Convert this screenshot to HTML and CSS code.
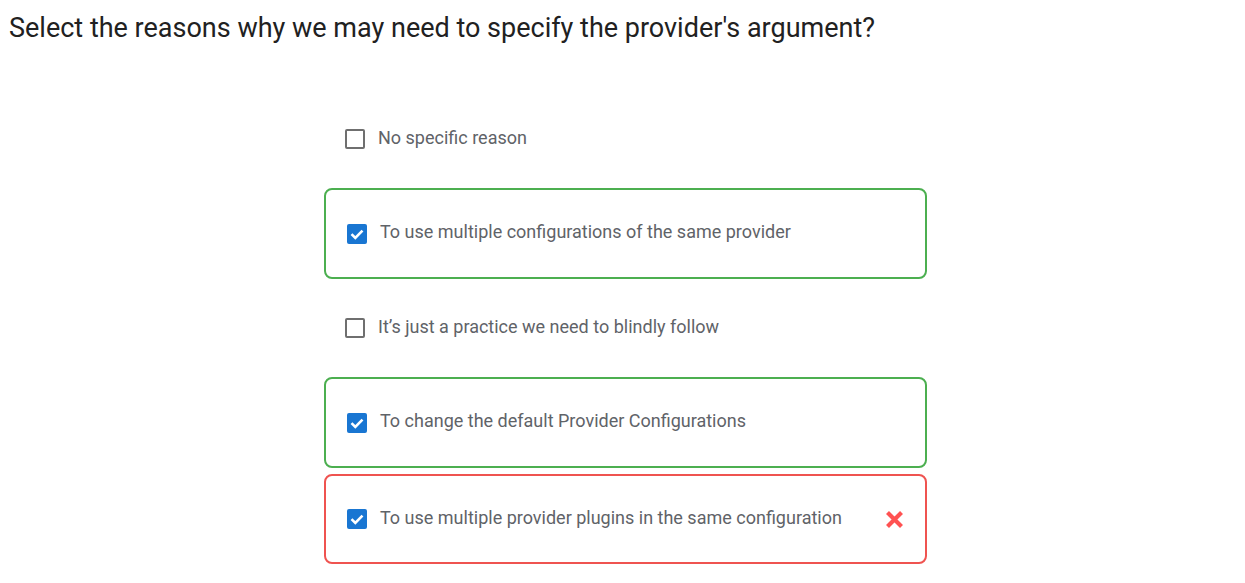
FILE: index.html
```html
<!DOCTYPE html>
<html>
<head>
<meta charset="utf-8">
<link rel="stylesheet" href="styles.css">
</head>
<body>
<h1 class="question">Select the reasons why we may need to specify the provider's argument?</h1>
<div class="options">
  <div class="option plain">
    <span class="box"></span>
    <span class="label">No specific reason</span>
  </div>
  <div class="option correct">
    <span class="box checked"><svg viewBox="0 0 20 20" width="20" height="20"><path d="M4.5 10.2 L8.3 14 L15.5 6.6" fill="none" stroke="#fff" stroke-width="2.6"/></svg></span>
    <span class="label">To use multiple configurations of the same provider</span>
  </div>
  <div class="option plain">
    <span class="box"></span>
    <span class="label">It’s just a practice we need to blindly follow</span>
  </div>
  <div class="option correct">
    <span class="box checked"><svg viewBox="0 0 20 20" width="20" height="20"><path d="M4.5 10.2 L8.3 14 L15.5 6.6" fill="none" stroke="#fff" stroke-width="2.6"/></svg></span>
    <span class="label">To change the default Provider Configurations</span>
  </div>
  <div class="option wrong">
    <span class="box checked"><svg viewBox="0 0 20 20" width="20" height="20"><path d="M4.5 10.2 L8.3 14 L15.5 6.6" fill="none" stroke="#fff" stroke-width="2.6"/></svg></span>
    <span class="label">To use multiple provider plugins in the same configuration</span>
    <svg class="cross" viewBox="0 0 19 19" width="19" height="19"><path d="M2.5 2.5 L16.5 16.5 M16.5 2.5 L2.5 16.5" stroke="#ff5252" stroke-width="4.2" fill="none"/></svg>
  </div>
</div>
</body>
</html>
```
FILE: styles.css
```css
html, body {
  margin: 0;
  padding: 0;
  background: #fff;
}
body {
  font-family: Roboto, "Liberation Sans", sans-serif;
}
.question {
  margin: 0;
  padding: 11px 0 0 9px;
  font-size: 27px;
  font-weight: 400;
  line-height: 34px;
  color: #212121;
}
.options {
  width: 603px;
  margin: 51px 0 0 324px;
  display: flex;
  flex-direction: column;
  gap: 6px;
}
.option {
  display: flex;
  align-items: center;
  box-sizing: border-box;
  border-radius: 8px;
}
.plain {
  height: 86px;
  padding-left: 21px;
}
.correct, .wrong {
  height: 91px;
  padding-left: 21px;
  border: 2px solid #4caf50;
}
.wrong {
  height: 90px;
  border-color: #ef5350;
}
.box {
  width: 20px;
  height: 20px;
  box-sizing: border-box;
  border: 2px solid #6f6f6f;
  border-radius: 2px;
  flex: none;
  display: flex;
}
.box.checked {
  border: none;
  background: #1976d2;
}
.label {
  margin-left: 13px;
  font-size: 18px;
  color: #5f6368;
  position: relative;
  top: -2px;
}
.cross {
  margin-left: auto;
  margin-right: 21px;
  width: 19px;
  height: 19px;
}
```
